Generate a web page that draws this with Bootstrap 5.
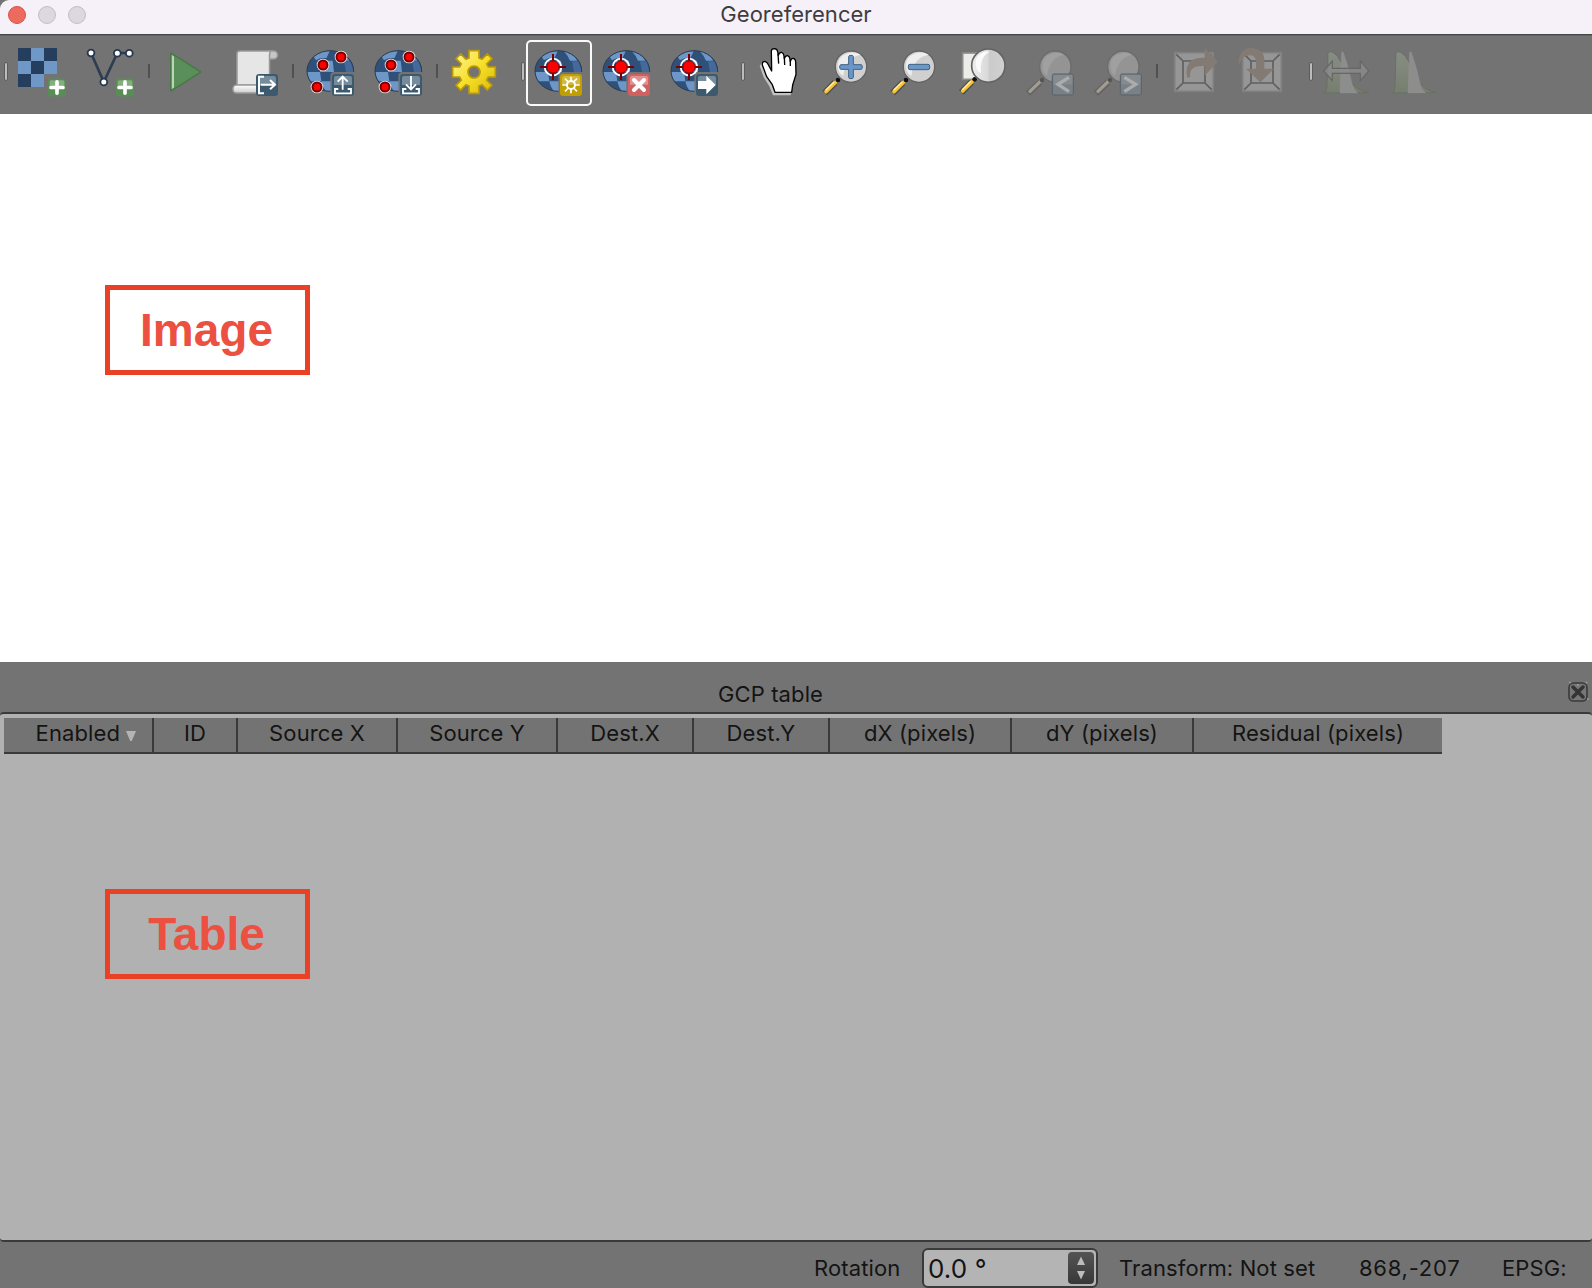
<!DOCTYPE html>
<html lang="en">
<head>
<meta charset="utf-8">
<title>Georeferencer</title>
<link href="https://cdn.jsdelivr.net/npm/bootstrap@5.3.0/dist/css/bootstrap.min.css" rel="stylesheet">
<style>
html,body{height:100%}
body{font-family:Inter,"Liberation Sans",sans-serif;font-size:22px;line-height:30px;color:#141414;background:#737373;letter-spacing:.12px}
.titlebar{height:34px;background:#f6f1f8;color:#3f3c40;border-radius:9px 0 0 0}
.lights{gap:12px;padding-left:8px;height:30px}
.light{width:18px;height:18px;border-radius:50%;background:#dcd8de;border:1px solid #c2bec4}
.light-close{background:#ed6a5e;border-color:#d5544a}
.window-name{height:30px;line-height:29px;letter-spacing:.03px}
.toolbar{height:80px;border-top:1px solid #464646;box-shadow:inset 0 1px #636363}
.tool{width:68px;height:76px;padding:0;border:0;background:none;flex:none}
.tool svg{display:block;width:68px;height:76px}
.sep{width:8px;height:76px;flex:none}
.sep i{display:block;width:2px;height:14px;background:#505050;margin:29px 0 0 4px}
.grip{flex:none;height:76px}
.grip i{display:block;width:4px;height:19px;background:#bcbcbc;border:1px solid #5b5b5b;border-radius:2px;margin-top:27px}
.canvas-area{height:548px;background:#fff;padding:171px 0 0 105px}
.callout-box{width:205px;height:90px;border:5px solid #ea4025;color:#ec5040;font:bold 46px/80px "Liberation Sans",sans-serif;letter-spacing:0;text-align:center;padding-right:2px}
.dock-title{height:50px;padding-top:17px;padding-right:51px}
.dock-close{position:absolute;right:3px;top:19px;width:22px;height:22px}
.gcp{height:530px;background:#b1b1b1;border-top:2px solid #3a3a3a;border-bottom:2px solid #3a3a3a;border-radius:4px;padding:4px 0 0 4px}
.gcp-head{width:1438px;table-layout:fixed;border-collapse:separate;border-spacing:0}
.gcp-head th{height:36px;padding:0 0 4px;line-height:30px;font-weight:400;text-align:center;background:#737373;border-right:2px solid #3a3a3a;border-bottom:2px solid #3a3a3a;white-space:nowrap}
.gcp-head th:last-child{border-right:0}
.gcp-head th.sorted{padding-left:16px}
.table-zone{padding:135px 0 0 101px}
.statusbar{height:46px;padding-left:814px;white-space:nowrap}
.statusbar>span{line-height:30px;margin-top:11px}
.coords{letter-spacing:.75px}
.spin{width:176px;height:40px;margin-top:6px;border:2px solid #3a3a3a;border-radius:6px;background:#b4b4b4;padding:2px 2px 2px 4px;font-size:26px;line-height:33px}
.spin-btn{width:26px;height:32px;border-radius:4px;background:linear-gradient(#545454,#383838)}
</style>
<script src="https://cdn.jsdelivr.net/npm/bootstrap@5.3.0/dist/js/bootstrap.bundle.min.js"></script>
</head>
<body class="d-flex flex-column overflow-hidden">
<svg width="0" height="0" class="position-absolute">
<defs>
<linearGradient id="gold" x1="0" y1="0" x2="1" y2="1"><stop offset="0" stop-color="#fff6a0"/><stop offset=".5" stop-color="#f6e02c"/><stop offset="1" stop-color="#d8b800"/></linearGradient>
<linearGradient id="lens" x1="0" y1="0" x2="1" y2="0"><stop offset="0" stop-color="#eee"/><stop offset=".5" stop-color="#d8d8d8"/><stop offset=".52" stop-color="#cbcbcb"/><stop offset="1" stop-color="#d0d0d0"/></linearGradient>
<linearGradient id="roll" x1="0" y1="0" x2="0" y2="1"><stop offset="0" stop-color="#fff"/><stop offset="1" stop-color="#ccc"/></linearGradient>
<linearGradient id="hist" x1="0" y1="0" x2="0" y2="1"><stop offset="0" stop-color="#898d85"/><stop offset="1" stop-color="#757f6e"/></linearGradient>
<clipPath id="gclip"><ellipse cx="151" cy="123" rx="70" ry="61"/></clipPath>
<g id="globe">
<ellipse cx="151" cy="123" rx="70" ry="61" fill="#2f5179"/>
<g clip-path="url(#gclip)" fill="#6d97c8">
<path d="M98 76L118 64H150L140 84Q120 82 108 91Z"/><path d="M151 60H176L192 92H158L140 84Z" fill="#2f5179"/><path d="M166 62Q195 68 208 92H186Q180 76 166 62Z"/>
<path d="M80 126H120L124 154H92Q82 142 80 126Z"/><path d="M120 92H158L162 126H120Z"/><path d="M192 94H212L222 126H198Z" fill="#44699a"/><path d="M124 154H160V186H140Q128 174 124 154Z"/>
</g>
<ellipse cx="151" cy="123" rx="70" ry="61" fill="none" stroke="#2b3b50" stroke-width="3"/>
<path d="M151 190V138Q151 126 163 126H226V190Z" fill="#737373"/>
</g>
<g id="dot"><circle r="19" fill="#f3eeee"/><circle r="16.5" fill="#700"/><circle r="10.5" fill="#f00"/></g>
<g id="slate"><rect width="66" height="66" rx="10" fill="#3c596d"/><path d="M6 33V12Q6 6 12 6H54Q60 6 60 12V33Z" fill="#748c9b"/></g>
<g id="plus"><rect width="54" height="54" rx="9" fill="#588e55"/><path d="M5 27V10Q5 5 10 5H44Q49 5 49 10V27Z" fill="#84ad80"/><path d="M27 10V44M9 27H45" stroke="#fff" stroke-width="11" stroke-linecap="round"/></g>
<g id="target"><circle cx="129" cy="111" r="25" fill="none" stroke="#fff" stroke-width="5.5"/><path d="M90 111H168M129 72V150" stroke="#780000" stroke-width="6"/><circle cx="129" cy="111" r="18.5" fill="#f00" stroke="#780000" stroke-width="3"/></g>
<g id="handle"><path d="M285 158L254 189" stroke="#505050" stroke-width="20"/><path d="M286 157L258 185" stroke="#f8c32e" stroke-width="11" stroke-linecap="round"/><path d="M282 156L257 181" stroke="#fff0c0" stroke-width="4"/><circle cx="294" cy="150" r="7" fill="#111"/></g>
<g id="magnifier"><use href="#handle"/><circle cx="333" cy="110" r="47" fill="#d0d0d0" stroke="#646464" stroke-width="4"/><path d="M295 120Q286 78 330 68Q350 66 362 74Q316 82 310 137Q300 134 295 120Z" fill="#eee"/></g>
<g id="dimlens"><path d="M90 157L54 190" stroke="#656565" stroke-width="19"/><path d="M88 157L60 184" stroke="#a29d90" stroke-width="10" stroke-linecap="round"/><circle cx="96" cy="150" r="6.5" fill="#555"/><circle cx="136" cy="110" r="47" fill="#949494" stroke="#6b6b6b" stroke-width="4"/><path d="M98 116Q93 73 139 69Q154 70 162 74Q119 82 111 137Q100 130 98 116Z" fill="#a0a0a0"/><rect x="127" y="132" width="63" height="63" rx="5" fill="#798187" stroke="#586268" stroke-width="3"/><path d="M130 163V135H187V163Z" fill="#858b8f"/></g>
<g id="frame"><rect x="494" y="68" width="116" height="116" fill="#969696" stroke="#808080" stroke-width="5"/><path d="M519 93H585V159H519ZM499 73L519 93M605 73L585 93M499 179L519 159M605 179L585 159" fill="none" stroke="#606060" stroke-width="5"/></g>
<g id="histogram"><path d="M305 189Q315 188 315 165L318 67Q330 60 347 80L363 105Q380 160 405 174Q420 185 441 188Z" fill="url(#hist)" stroke="#687061" stroke-width="3"/><path d="M354 189L359 67Q363 62 366 73Q382 120 388 153Q394 180 407 189Z" fill="#8d8d8d" stroke="#999" stroke-width="1"/></g>
</defs>
</svg>

<header class="titlebar position-relative flex-shrink-0">
<div class="lights d-flex align-items-center position-absolute"><span class="light light-close"></span><span class="light"></span><span class="light"></span></div>
<div class="window-name text-center">Georeferencer</div>
</header>

<div class="toolbar d-flex flex-shrink-0" role="toolbar">
<div class="grip" style="width:8px"><i class="ms-1"></i></div>
<button class="tool" aria-label="Open raster"><svg viewBox="8 35 68 76"><path d="M18 48H57V74H44V87H18Z" fill="#6f98c7"/><path d="M18 48h13v13h13V48h13v13H44v13H31v13H18V74h13V61H18Z" fill="#253e5d"/><use href="#plus" transform="translate(48 78.500) scale(.33333)"/></svg></button>
<button class="tool" aria-label="Open vector"><svg viewBox="76 35 68 76"><path d="M91 53L103.800 82L117.300 53H129.300" fill="none" stroke="#2d3d52" stroke-width="2.700"/><g fill="#fff" stroke="#26374e" stroke-width="1.800"><circle cx="91" cy="53" r="3.400"/><circle cx="103.800" cy="82" r="3.400"/><circle cx="117.300" cy="53.300" r="3.400"/><circle cx="129.300" cy="53.300" r="3.400"/></g><use href="#plus" transform="translate(116 78.500) scale(.33333)"/></svg></button>
<div class="sep"><i></i></div>
<button class="tool" aria-label="Start georeferencing"><svg viewBox="152 35 68 76"><path d="M170.800 52.800V91.200L201 72Z" fill="#5b8f59" stroke="#4b784a" stroke-width="1.500" stroke-linejoin="round"/><path d="M171.800 55L174 56.500V87.500L171.800 89Z" fill="#bad5b7"/></svg></button>
<button class="tool" aria-label="Generate script"><svg viewBox="220 35 68 76"><g stroke="#9a9a9a" stroke-width="1.500"><path d="M270 51H273.500A4 4 0 0 1 273.500 59H268Z" fill="#c6c6c6"/><path d="M237 85V53.500Q237 51 240 51H271Q269.500 52 269.500 55V85Z" fill="#e6e6e6"/><rect x="233" y="85" width="34" height="8" rx="3.500" fill="url(#roll)"/></g><g transform="translate(256 74) scale(.33333)"><use href="#slate"/><path d="M24 8H9V58H24M14 32H56M42 18L57 32L42 46" fill="none" stroke="#fff" stroke-width="6"/></g></svg></button>
<div class="sep"><i></i></div>
<button class="tool" aria-label="Load GCP points"><svg viewBox="296 35 68 76"><g transform="translate(280 30) scale(.33333)"><use href="#globe"/><use href="#dot" x="183" y="81"/><use href="#dot" x="129" y="105"/><use href="#dot" x="111" y="171"/><use href="#slate" x="156" y="132"/><path d="M188 179V141M173 155L188 140L203 155M175 177H165V190H213V177H203" fill="none" stroke="#fff" stroke-width="5.500"/></g></svg></button>
<button class="tool" aria-label="Save GCP points"><svg viewBox="364 35 68 76"><g transform="translate(348 30) scale(.33333)"><use href="#globe"/><use href="#dot" x="183" y="81"/><use href="#dot" x="129" y="105"/><use href="#dot" x="111" y="171"/><use href="#slate" x="156" y="132"/><path d="M189 138V177M174 163L189 178L204 163M175 177H165V190H213V177H203" fill="none" stroke="#fff" stroke-width="5.500"/></g></svg></button>
<div class="sep"><i></i></div>
<button class="tool" aria-label="Transformation settings"><svg viewBox="440 35 68 76"><g transform="translate(280 30) scale(.33333)"><path fill-rule="evenodd" fill="url(#gold)" stroke="#bb9a08" stroke-width="5" d="M567 62H597V84L606 88L622 72L636 86L620 102L625 111H646V141H625L620 150L636 166L622 180L606 164L597 168V190H567V168L558 164L542 180L528 166L544 150L539 141H518V111H539L544 102L528 86L542 72L558 88L567 84ZM582 108A18 18 0 1 0 582.100 108Z"/></g></svg></button>
<div class="grip" style="width:17px"><i style="margin-left:13px"></i></div>
<button class="tool" aria-label="Add point"><svg viewBox="525 35 68 76"><rect x="527" y="41" width="64" height="64" rx="4" fill="none" stroke="#fafafa" stroke-width="2"/><g transform="translate(510 30) scale(.33333)"><use href="#globe" x="-6"/><use href="#target"/><rect x="150" y="132" width="66" height="66" rx="10" fill="#c19f00"/><path d="M156 164V144Q156 138 162 138H204Q210 138 210 144V164Z" fill="#d1b944"/><circle cx="183" cy="165" r="12" fill="none" stroke="#fff" stroke-width="6"/><path d="M183 140V153M183 177V190M157 165H171M195 165H209M165 146L175 156M201 146L191 156M165 184L175 174M201 184L191 174" stroke="#fff" stroke-width="5"/></g></svg></button>
<button class="tool" aria-label="Delete point"><svg viewBox="593 35 68 76"><g transform="translate(578 30) scale(.33333)"><use href="#globe" x="-6"/><use href="#target"/><rect x="150" y="132" width="66" height="66" rx="10" fill="#d16161"/><path d="M156 164V144Q156 138 162 138H204Q210 138 210 144V164Z" fill="#de9292"/><path d="M168 150L198 180M198 150L168 180" stroke="#fff" stroke-width="12" stroke-linecap="round"/></g></svg></button>
<button class="tool" aria-label="Move point"><svg viewBox="661 35 68 76"><g transform="translate(646 30) scale(.33333)"><use href="#globe" x="-6"/><use href="#target"/><use href="#slate" x="150" y="132"/><path d="M156 153H181V137L209 165L181 193V177H156Z" fill="#fff"/></g></svg></button>
<div class="grip" style="width:16px"><i style="margin-left:12px"></i></div>
<button class="tool" aria-label="Pan"><svg viewBox="745 35 68 76"><g transform="translate(740 30) scale(.33333)"><path d="M99 196L88 169L71 142L59 108L67 96L105 187L155 188L151 196Z" fill="#c3c3c3"/><path d="M105 187L97 164L80 140L67 105Q66 94 75 94Q82 96 86 106L95 123L94 64Q94 56 103 56Q112 57 113 65L115 76Q118 66 125 67Q131 69 132 78L133 86Q136 76 143 77Q150 80 150 88L151 95Q153 84 160 85Q167 87 167 96L168 133L158 165L155 187Z" fill="#fff" stroke="#000" stroke-width="4" stroke-linejoin="round"/><path d="M114 72L116 101M133 80L134 105M151 89L151 108" stroke="#000" stroke-width="4"/></g></svg></button>
<button class="tool" aria-label="Zoom in"><svg viewBox="813 35 68 76"><g transform="translate(740 30) scale(.33333)"><use href="#magnifier"/><path d="M326 80Q326 76 333 76Q340 76 340 80V104H363Q367 104 367 111Q367 118 363 118H340V142Q340 146 333 146Q326 146 326 142V118H303Q299 118 299 111Q299 104 303 104H326Z" fill="#6b97c8" stroke="#3d5f86" stroke-width="3"/></g></svg></button>
<button class="tool" aria-label="Zoom out"><svg viewBox="881 35 68 76"><g transform="translate(740 30) scale(.33333)"><use href="#magnifier" x="204"/><rect x="505" y="103" width="64" height="16" rx="5" fill="#6b97c8" stroke="#3d5f86" stroke-width="3"/></g></svg></button>
<button class="tool" aria-label="Zoom to layer"><svg viewBox="949 35 68 76"><g transform="translate(740 30) scale(.33333)"><rect x="668" y="69" width="79" height="79" fill="#ecece9" stroke="#8d8d89" stroke-width="5"/><use href="#handle" x="410" y="-2"/><circle cx="745" cy="107" r="50" fill="url(#lens)" stroke="#646464" stroke-width="5"/><path d="M708 110Q701 78 733 65Q742 63 749 65Q718 80 723 129Q712 126 708 110Z" fill="#fafafa"/></g></svg></button>
<button class="tool" aria-label="Zoom last" disabled><svg viewBox="1017 35 68 76"><g transform="translate(1010 30) scale(.33333)"><use href="#dimlens"/><path d="M177 142L144 163L177 185" fill="none" stroke="#abacac" stroke-width="10"/></g></svg></button>
<button class="tool" aria-label="Zoom next" disabled><svg viewBox="1085 35 68 76"><g transform="translate(1010 30) scale(.33333)"><use href="#dimlens" x="204"/><path d="M343 142L377 163L343 185" fill="none" stroke="#abacac" stroke-width="10"/></g></svg></button>
<div class="sep"><i style="margin-left:3px"></i></div>
<button class="tool" aria-label="Link georeferencer to QGIS" disabled><svg viewBox="1161 35 68 76"><g transform="translate(1010 30) scale(.33333)"><use href="#frame"/><path d="M532 143Q523 111 543 92Q557 82 584 83V54L624 95L584 137V108Q556 106 546 117Q538 126 541 141Z" fill="#837a73"/></g></svg></button>
<button class="tool" aria-label="Link QGIS to georeferencer" disabled><svg viewBox="1229 35 68 76"><g transform="translate(1010 30) scale(.33333)"><use href="#frame" x="204"/><path d="M685 101Q684 72 707 57Q725 51 743 58Q763 67 763 89V116H792L751 157L708 116H738V92Q735 76 719 76Q696 78 689 101Z" fill="#837a73"/></g></svg></button>
<div class="grip" style="width:16px"><i style="margin-left:12px"></i></div>
<button class="tool" aria-label="Full histogram stretch" disabled><svg viewBox="1313 35 68 76"><g transform="translate(1290 30) scale(.33333)"><use href="#histogram" x="-204"/><path d="M101 123L127 93V115H211V93L236 123L211 152V130H127V152Z" fill="#8b8b8b" fill-opacity=".8" stroke="#666" stroke-width="3.500"/></g></svg></button>
<button class="tool" aria-label="Local histogram stretch" disabled><svg viewBox="1381 35 68 76"><g transform="translate(1290 30) scale(.33333)"><use href="#histogram"/></g></svg></button>
</div>

<main class="canvas-area flex-shrink-0"><div class="callout-box">Image</div></main>

<div class="dock-title position-relative text-center flex-shrink-0">GCP table
<svg class="dock-close" viewBox="0 0 22 22"><rect x="2" y="2" width="18" height="18" rx="4.500" fill="#777" stroke="#3a3a3a" stroke-width="1.600"/><path d="M6 6L16 16M16 6L6 16" stroke="#343434" stroke-width="3.500" stroke-linecap="round"/><path d="M10 4h2M2 1.500h2M18.500 1.500h2M20 18h2" stroke="#999" stroke-width="1.500"/></svg>
</div>
<section class="gcp flex-shrink-0">
<table class="gcp-head"><thead><tr>
<th class="sorted" style="width:150px">Enabled <svg width="10" height="10" viewBox="0 0 10 10" style="margin-bottom:-2px"><path d="M0 0H10L5.800 10H4.200Z" fill="#b4b4b4"/></svg></th>
<th style="width:84px">ID</th><th style="width:160px">Source X</th><th style="width:160px">Source Y</th><th style="width:136px">Dest.X</th><th style="width:136px">Dest.Y</th><th style="width:182px">dX (pixels)</th><th style="width:182px">dY (pixels)</th><th style="width:248px">Residual (pixels)</th>
</tr></thead></table>
<div class="table-zone"><div class="callout-box">Table</div></div>
</section>

<footer class="statusbar d-flex align-items-start flex-shrink-0">
<span style="width:108px">Rotation</span>
<div class="spin d-flex justify-content-between">0.0 °<div class="spin-btn"><svg class="d-block" width="26" height="32" viewBox="0 0 26 32"><path d="M13 4.500L17 13H9ZM13 27.500L17 19H9Z" fill="#bcbcbc"/></svg></div></div>
<span style="width:240px;margin-left:21px">Transform: Not set</span>
<span class="coords" style="width:143px">868,-207</span>
<span>EPSG:</span>
</footer>
</body>
</html>
